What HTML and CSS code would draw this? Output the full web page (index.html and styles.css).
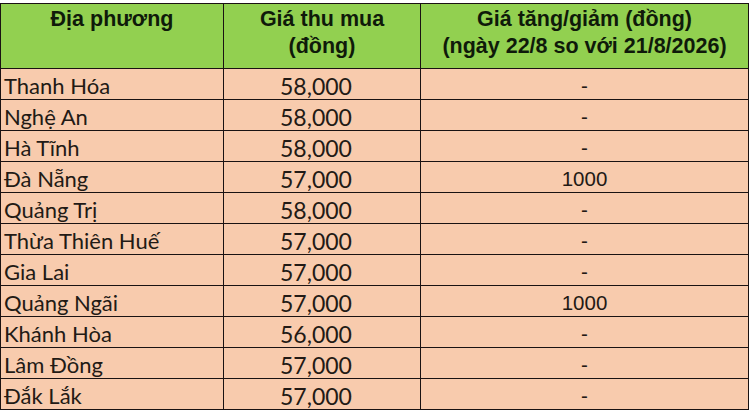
FILE: index.html
```html
<!DOCTYPE html>
<html lang="vi">
<head>
<meta charset="utf-8">
<title>Giá thu mua</title>
<link rel="stylesheet" href="styles.css">
</head>
<body>
<table class="price-table">
  <colgroup>
    <col class="c-place">
    <col class="c-price">
    <col class="c-change">
  </colgroup>
  <thead>
    <tr>
      <th>Địa phương</th>
      <th>Giá thu mua<br>(đồng)</th>
      <th>Giá tăng/giảm (đồng)<br>(ngày 22/8 so với 21/8/2026)</th>
    </tr>
  </thead>
  <tbody>
    <tr><td class="place">Thanh Hóa</td><td class="price">58,000</td><td class="change">-</td></tr>
    <tr><td class="place">Nghệ An</td><td class="price">58,000</td><td class="change">-</td></tr>
    <tr><td class="place">Hà Tĩnh</td><td class="price">58,000</td><td class="change">-</td></tr>
    <tr><td class="place">Đà Nẵng</td><td class="price">57,000</td><td class="change">1000</td></tr>
    <tr><td class="place">Quảng Trị</td><td class="price">58,000</td><td class="change">-</td></tr>
    <tr><td class="place">Thừa Thiên Huế</td><td class="price">57,000</td><td class="change">-</td></tr>
    <tr><td class="place">Gia Lai</td><td class="price">57,000</td><td class="change">-</td></tr>
    <tr><td class="place">Quảng Ngãi</td><td class="price">57,000</td><td class="change">1000</td></tr>
    <tr><td class="place">Khánh Hòa</td><td class="price">56,000</td><td class="change">-</td></tr>
    <tr><td class="place">Lâm Đồng</td><td class="price">57,000</td><td class="change">-</td></tr>
    <tr><td class="place">Đắk Lắk</td><td class="price">57,000</td><td class="change">-</td></tr>
  </tbody>
</table>
</body>
</html>
```
FILE: styles.css
```css
html, body {
  margin: 0;
  padding: 0;
  background: #ffffff;
}

.price-table {
  margin-top: 3px;
  width: 748px;
  table-layout: fixed;
  border-collapse: collapse;
  color: #221a15;
}

.c-place { width: 223px; }
.c-price { width: 197px; }
.c-change { width: 328px; }

.price-table th,
.price-table td {
  border: 1px solid #1a1212;
  padding: 0;
}

.price-table th {
  background: #92d050;
  height: 62px;
  vertical-align: top;
  padding-top: 2px;
  font-family: "Liberation Sans", Arial, sans-serif;
  font-weight: bold;
  font-size: 21.5px;
  line-height: 27px;
  text-align: center;
  color: #0f1a0a;
}

.price-table td {
  background: #f8cbad;
  height: 29px;
  vertical-align: bottom;
  padding-bottom: 1px;
  line-height: 24px;
  white-space: nowrap;
}

.place {
  font-family: Lato, "Noto Sans", sans-serif;
  font-size: 22px;
  padding-left: 3px !important;
  text-align: left;
}

.price {
  font-family: Lato, "Noto Sans", sans-serif;
  font-size: 23px;
  text-align: center;
  padding-right: 12px !important;
}

.change {
  font-family: "Liberation Sans", Arial, sans-serif;
  font-size: 20.5px;
  text-align: center;
}
```
